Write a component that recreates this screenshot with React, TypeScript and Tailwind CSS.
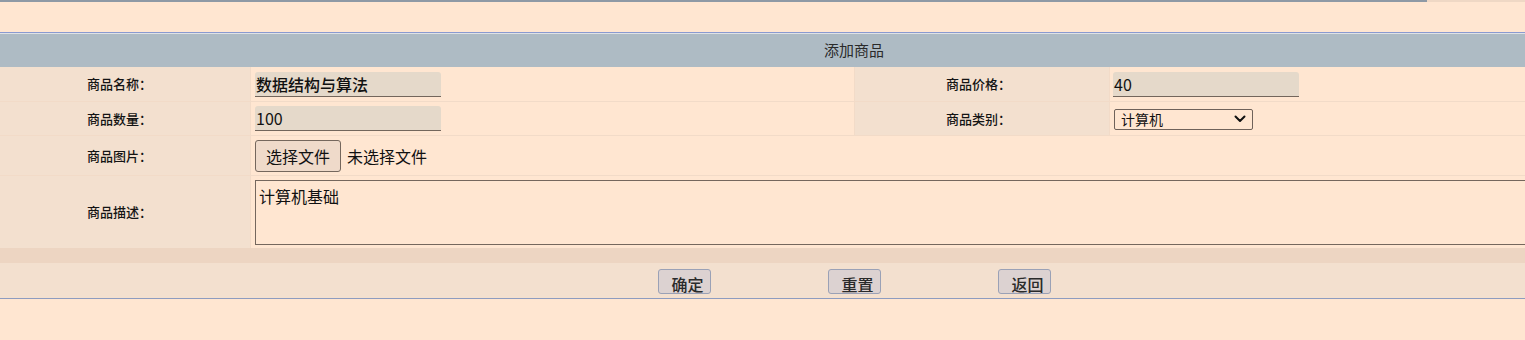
import React from "react";

const font = { fontFamily: '"Noto Sans CJK SC", "Noto Sans", sans-serif' };

function Label({ children, pl }: { children: React.ReactNode; pl: string }) {
  return (
    <div className={`flex items-center bg-[#f3e0cf] text-[13px] font-medium text-[#141414] ${pl}`}>
      {children}
    </div>
  );
}

function TextBox({ value, bold }: { value: string; bold?: boolean }) {
  return (
    <div
      className={`h-[25px] w-[186px] rounded-t-[3px] border-b border-[#73665c] bg-[#e5d9ca] pl-[1px] text-[16px] leading-[25px] text-[#111] ${
        bold ? "font-medium" : ""
      }`}
    >
      {value}
    </div>
  );
}

export default function App() {
  return (
    <div className="min-h-[340px] w-full overflow-hidden bg-[#ffe6d1]" style={font}>
      <div className="flex h-[2px] w-[1525px]">
        <div className="w-[1427px] bg-[#8e99a5]" />
        <div className="flex-1 bg-[#efd8c5]" />
      </div>
      <div className="h-[30px]" />
      <div className="w-[1708px]">
        <div className="h-px bg-[#8a9ad0]" />
        <div className="h-px bg-[#dfe2e6]" />
        <div className="flex h-[33px] items-center justify-center bg-[#aebbc4] text-[15px] text-[#2a2a2a]">
          添加商品
        </div>

        {/* Row 1 */}
        <div className="grid h-[35px] grid-cols-[250px_603px_254px_1fr] gap-x-px border-b border-[#f2dbc8] bg-[#f2dbc8]">
          <Label pl="pl-[87px]">商品名称：</Label>
          <div className="flex items-center bg-[#ffe6d1] pl-[4px]">
            <TextBox value="数据结构与算法" bold />
          </div>
          <Label pl="pl-[91px]">商品价格：</Label>
          <div className="flex items-center bg-[#ffe6d1] pl-[3px]">
            <TextBox value="40" />
          </div>
        </div>

        {/* Row 2 */}
        <div className="grid h-[34px] grid-cols-[250px_603px_254px_1fr] gap-x-px border-b border-[#f2dbc8] bg-[#f2dbc8]">
          <Label pl="pl-[87px]">商品数量：</Label>
          <div className="flex items-center bg-[#ffe6d1] pl-[4px]">
            <TextBox value="100" />
          </div>
          <Label pl="pl-[91px]">商品类别：</Label>
          <div className="flex items-center bg-[#ffe6d1] pl-[4px]">
            <div className="mt-[1px] flex h-[21px] w-[139px] items-center justify-between rounded-[2px] border border-[#6f625a] pl-[6px] pr-[6px] text-[14px] text-[#111]">
              <span>计算机</span>
              <svg width="12" height="8" viewBox="0 0 12 8" fill="none">
                <path d="M1.5 1.5 L6 6 L10.5 1.5" stroke="#111" strokeWidth="2" strokeLinecap="round" strokeLinejoin="round" />
              </svg>
            </div>
          </div>
        </div>

        {/* Row 3 */}
        <div className="grid h-[40px] grid-cols-[250px_1fr] gap-x-px border-b border-[#f2dbc8] bg-[#f2dbc8]">
          <Label pl="pl-[87px]">商品图片：</Label>
          <div className="flex items-center gap-[6px] bg-[#ffe6d1] pl-[4px] text-[16px] text-[#111]">
            <div className="flex h-[32px] w-[86px] items-center justify-center rounded-[3px] border border-[#75675d] bg-[#efdaca]">
              选择文件
            </div>
            <span>未选择文件</span>
          </div>
        </div>

        {/* Row 4 */}
        <div className="grid h-[72px] grid-cols-[250px_1fr] gap-x-px bg-[#f2dbc8]">
          <Label pl="pl-[87px]">商品描述：</Label>
          <div className="flex items-center bg-[#ffe6d1] pl-[4px]">
            <div className="h-[65px] w-[1400px] shrink-0 border border-[#75675d] px-[3px] pt-[5px] text-[16px] leading-[20px] text-[#111]">
              计算机基础
            </div>
          </div>
        </div>

        {/* Band */}
        <div className="h-[15px] bg-[#edd5c2]" />

        {/* Buttons */}
        <div className="flex h-[35px] items-center justify-center gap-[117px] bg-[#f3e0cf] pt-[1px]">
          {["确定", "重置", "返回"].map((t) => (
            <div
              key={t}
              className="h-[25px] w-[53px] rounded-[3px] border border-[#9aa1b6] bg-[#dcd2d1] pl-[13px] pt-[6px] text-[16px] font-medium leading-[17px] text-[#2a2a2a]"
            >
              {t}
            </div>
          ))}
        </div>
        <div className="h-px bg-[#8d9cc0]" />
      </div>
    </div>
  );
}
